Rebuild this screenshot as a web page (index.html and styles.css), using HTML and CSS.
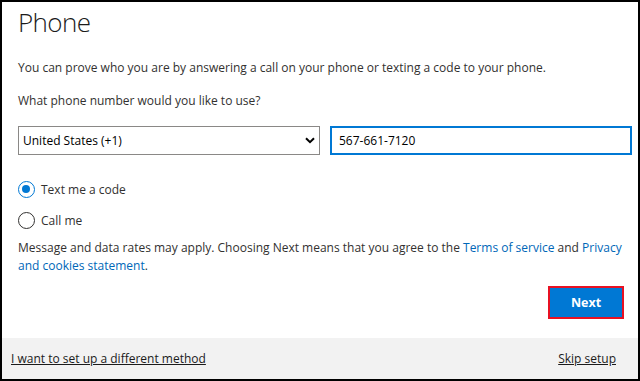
FILE: index.html
```html
<!DOCTYPE html>
<html lang="en">
<head>
    <meta charset="UTF-8">
    <title>Phone</title>
    <link rel="stylesheet" href="styles.css">
</head>
<body>
    <div class="frame">
        <div class="content">
            <h1 class="title">Phone</h1>
            <p class="text intro">You can prove who you are by answering a call on your phone or texting a code to your phone.</p>
            <p class="text question">What phone number would you like to use?</p>
            <div class="fields">
                <div class="select-box">
                    <span>United States (+1)</span>
                    <svg class="chevron" width="10" height="7" viewBox="0 0 10 7"><path d="M1 1.2 L5 5.2 L9 1.2" fill="none" stroke="#000" stroke-width="2"/></svg>
                </div>
                <div class="phone-input">567-661-7120</div>
            </div>
            <div class="options">
                <label class="option"><span class="radio checked"></span>Text me a code</label>
                <label class="option"><span class="radio"></span>Call me</label>
            </div>
            <p class="text notice">Message and data rates may apply. Choosing Next means that you agree to the <a href="#">Terms of service</a> and <a href="#">Privacy and cookies statement</a>.</p>
            <div class="actions">
                <button class="next">Next</button>
            </div>
        </div>
        <div class="footer">
            <a href="#">I want to set up a different method</a>
            <a href="#">Skip setup</a>
        </div>
    </div>
</body>
</html>
```

FILE: styles.css
```css
body {
    margin: 0;
    font-family: 'Open Sans', 'Noto Sans', Arial, sans-serif;
    color: #323130;
    background: #fff;
}

.frame {
    width: 640px;
    height: 381px;
    box-sizing: border-box;
    border: 2px solid #000;
    display: flex;
    flex-direction: column;
}

.content {
    flex: 1;
    padding: 0 4px 0 16px;
}

.title {
    font-size: 26px;
    font-weight: 300;
    letter-spacing: -0.6px;
    margin: 2px 0 0;
    line-height: 36px;
    color: #1b1b1b;
}

.text {
    font-size: 12px;
    line-height: 18px;
    margin: 0;
}

.intro {
    margin-top: 19px;
}

.question {
    margin-top: 15px;
}

.fields {
    display: flex;
    gap: 10px;
    margin-top: 16px;
}

.select-box {
    width: 302px;
    height: 29px;
    box-sizing: border-box;
    border: 1px solid #8a8886;
    display: flex;
    align-items: center;
    justify-content: space-between;
    padding: 0 4px 0 4px;
    font-size: 12px;
    color: #000;
}

.phone-input {
    width: 302px;
    height: 29px;
    box-sizing: border-box;
    border: 2px solid #0078d4;
    display: flex;
    align-items: center;
    padding: 0 7px;
    font-size: 12px;
    color: #000;
}

.options {
    margin-top: 25px;
    display: flex;
    flex-direction: column;
    gap: 12px;
}

.option {
    display: flex;
    align-items: center;
    gap: 6px;
    font-size: 12px;
    height: 19px;
}

.radio {
    width: 17px;
    height: 17px;
    border: 1.5px solid #323130;
    border-radius: 50%;
    box-sizing: border-box;
    position: relative;
}

.radio.checked {
    border-color: #0078d4;
}

.radio.checked::after {
    content: "";
    position: absolute;
    left: 3px;
    top: 3px;
    width: 8px;
    height: 8px;
    border-radius: 50%;
    background: #0078d4;
}

.notice {
    margin-top: 9px;
}

.notice a {
    color: #0067b8;
    text-decoration: none;
}

.actions {
    display: flex;
    justify-content: flex-end;
    margin-top: 11px;
    padding-right: 10px;
}

.next {
    width: 76px;
    height: 33px;
    background: #0078d4;
    border: 2px solid #e81123;
    color: #fff;
    font-family: inherit;
    font-weight: 700;
    font-size: 12.5px;
}

.footer {
    height: 41px;
    background: #f2f2f2;
    display: flex;
    justify-content: space-between;
    align-items: center;
    padding: 0 22px 0 9px;
}

.footer a {
    color: #1b1b1b;
    font-size: 12px;
    text-decoration: underline;
}
```
